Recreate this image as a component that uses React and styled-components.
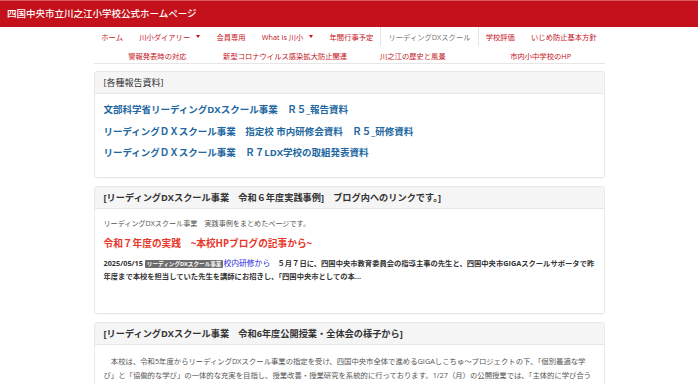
import React from "react";
import styled, { createGlobalStyle } from "styled-components";

const GlobalStyle = createGlobalStyle`
  html, body {
    margin: 0;
    padding: 0;
    background: #fff;
    overflow: hidden;
  }
  body {
    font-family: "Open Sans", "Noto Sans CJK JP", sans-serif;
    color: #333;
  }
`;

const navTop = [
  { label: "ホーム" },
  { label: "川小ダイアリー", caret: true },
  { label: "会員専用" },
  { label: "What is 川小", caret: true },
  { label: "年間行事予定" },
  { label: "リーディングDXスクール", active: true },
  { label: "学校評価" },
  { label: "いじめ防止基本方針" },
];

const navBottom = [
  "警報発表時の対応",
  "新型コロナウイルス感染拡大防止関連",
  "川之江の歴史と風景",
  "市内小中学校のHP",
];

const reports = [
  "文部科学省リーディングDXスクール事業　Ｒ５_報告資料",
  "リーディングＤＸスクール事業　指定校 市内研修会資料　Ｒ５_研修資料",
  "リーディングＤＸスクール事業　Ｒ７LDX学校の取組発表資料",
];

const IDEO_SPACE = "\u3000";

export default function App() {
  return (
    <>
      <GlobalStyle />
      <Header>四国中央市立川之江小学校公式ホームページ</Header>
      <Main>
        <Nav>
          <NavRow>
            {navTop.map((item) => (
              <NavItem key={item.label} $active={item.active}>
                {item.label}
                {item.caret && <Caret />}
              </NavItem>
            ))}
          </NavRow>
          <NavGrid>
            {navBottom.map((label) => (
              <NavCell key={label}>{label}</NavCell>
            ))}
          </NavGrid>
        </Nav>

        <Panel>
          <PanelHead>[各種報告資料]</PanelHead>
          <ReportBody>
            {reports.map((r) => (
              <ReportLink key={r}>{r}</ReportLink>
            ))}
          </ReportBody>
        </Panel>

        <Panel>
          <PanelHead $bold>
            [リーディングDXスクール事業　令和６年度実践事例]　ブログ内へのリンクです。]
          </PanelHead>
          <BlogBody>
            <Note>リーディングDXスクール事業　実践事例をまとめたページです。</Note>
            <RedHeading>令和７年度の実践　~本校HPブログの記事から~</RedHeading>
            <Entry>
              2025/05/15 <Badge>リーディングDXスクール事業</Badge>
              <EntryLink>校内研修から</EntryLink>
              {IDEO_SPACE}
              ５月７日に、四国中央市教育委員会の指導主事の先生と、四国中央市GIGAスクールサポータで昨年度まで本校を担当していた先生を講師にお招きし、「四国中央市としての本...
            </Entry>
          </BlogBody>
        </Panel>

        <Panel>
          <PanelHead $bold>
            [リーディングDXスクール事業　令和6年度公開授業・全体会の様子から]
          </PanelHead>
          <TextBody>
            {IDEO_SPACE}
            本校は、令和5年度からリーディングDXスクール事業の指定を受け、四国中央市全体で進めるGIGAしこちゅ～プロジェクトの下、「個別最適な学び」と「協働的な学び」の一体的な充実を目指し、授業改善・授業研究を系統的に行っております。1/27（月）の公開授業では、「主体的に学び合う児童の育成～ICTを活用した協働的な学びを目指して～」をサブテーマとし、午前中に授業公開、午後は全体会をもちました。全体会では、放送大学の先生を講師にお招きし、ご講演をいただきました。
          </TextBody>
        </Panel>
      </Main>
    </>
  );
}

const Header = styled.header`
  height: 26px;
  border-top: 1px solid #d9595e;
  background: #c3121b;
  color: #fff;
  font-size: 9.5px;
  font-weight: 500;
  line-height: 26px;
  padding-left: 7px;
`;

const Main = styled.main`
  width: 511px;
  margin: 0 auto;
  display: flex;
  flex-direction: column;
  gap: 8px;
`;

const Nav = styled.nav`
  border-bottom: 1px solid #e6e6e6;
  margin-bottom: -1px;
`;

const NavRow = styled.div`
  display: flex;
  justify-content: center;
  height: 19px;
`;

const NavItem = styled.span`
  display: flex;
  align-items: center;
  padding: 0 7.1px;
  font-size: 7.3px;
  color: ${(p) => (p.$active ? "#777" : "#c3121b")};
  border-left: 1px solid ${(p) => (p.$active ? "#e4e4e4" : "transparent")};
  border-right: 1px solid ${(p) => (p.$active ? "#e4e4e4" : "transparent")};
  margin: 0 ${(p) => (p.$active ? "-1px" : "0")};
  white-space: nowrap;
`;

const Caret = styled.span`
  display: inline-block;
  margin-left: 6px;
  border-left: 2.5px solid transparent;
  border-right: 2.5px solid transparent;
  border-top: 3px solid #c3121b;
`;

const NavGrid = styled.div`
  display: grid;
  grid-template-columns: repeat(4, 1fr);
  height: 15px;
  padding-top: 2px;
`;

const NavCell = styled.span`
  display: flex;
  align-items: center;
  justify-content: center;
  font-size: 7.3px;
  color: #c3121b;
  white-space: nowrap;
`;

const Panel = styled.section`
  border: 1px solid #e8e8e8;
  border-radius: 3px;
  box-shadow: 0 1px 1px rgba(0, 0, 0, 0.03);
  overflow: hidden;
`;

const PanelHead = styled.div`
  height: 21px;
  display: flex;
  align-items: center;
  padding: 0 9px;
  background: #f5f5f5;
  border-bottom: 1px solid #e8e8e8;
  font-size: ${(p) => (p.$bold ? "9.2px" : "9px")};
  font-weight: ${(p) => (p.$bold ? 700 : 400)};
  color: #333;
  white-space: nowrap;
`;

const ReportBody = styled.div`
  display: flex;
  flex-direction: column;
  padding: 5px 9px 13px;
`;

const ReportLink = styled.a`
  font-size: 9.5px;
  font-weight: 700;
  color: #22679f;
  line-height: 21.5px;
  white-space: nowrap;
`;

const BlogBody = styled.div`
  padding: 8px 9px 30px;
`;

const Note = styled.p`
  margin: 0;
  font-size: 7.1px;
  color: #555;
  line-height: 12px;
`;

const RedHeading = styled.h3`
  margin: 7px 0 5px;
  font-size: 9.7px;
  font-weight: 700;
  color: #e8372a;
  line-height: 16px;
`;

const Entry = styled.p`
  margin: 0;
  font-size: 7.3px;
  font-weight: 700;
  color: #333;
  line-height: 13px;
`;

const Badge = styled.span`
  display: inline-block;
  background: #6d6d6d;
  color: #fff;
  font-size: 5.6px;
  line-height: 8px;
  padding: 0 2px;
  border-radius: 1px;
  vertical-align: middle;
`;

const EntryLink = styled.a`
  font-weight: 400;
  font-size: 7.8px;
  color: #2b2bd8;
`;

const TextBody = styled.p`
  margin: 0;
  padding: 9px 9px 20px;
  font-size: 7.35px;
  color: #555;
  line-height: 14.5px;
`;
